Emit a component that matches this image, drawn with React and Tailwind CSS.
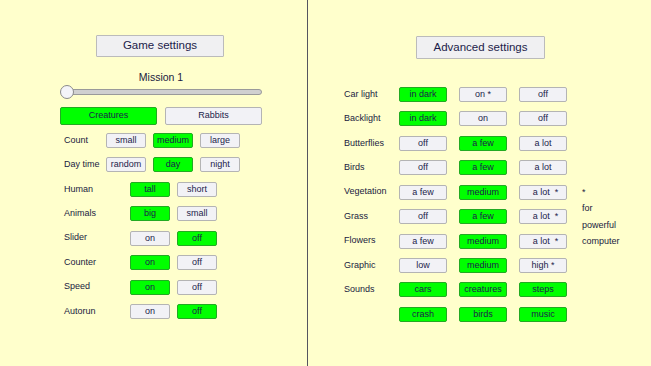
import React from "react";

const G = "bg-[#00ff00] border-[#22aa22]";
const N = "bg-[#f2f2f6] border-[#b4b4b4]";

function Btn({ on, w, children }) {
  return (
    <div
      className={`${on ? G : N} ${w} h-[15px] border rounded-[2px] flex items-center justify-center text-[9px] leading-none whitespace-pre text-[#1c1c4a]`}
    >
      {children}
    </div>
  );
}

function LRow({ label, items, indent }) {
  return (
    <div className="h-[24.43px] flex items-start">
      <div className="w-[46px] pl-[4px] h-[15px] flex items-center text-[9px] text-[#1a1a40]">{label}</div>
      <div className={`flex gap-[7px] ${indent ? "pl-[24px]" : ""}`}>
        {items.map(([t, on], i) => (
          <Btn key={i} on={on} w="w-[40px]">{t}</Btn>
        ))}
      </div>
    </div>
  );
}

function RRow({ label, items }) {
  return (
    <div className="h-[24.43px] flex items-start">
      <div className="w-[55px] h-[15px] flex items-center text-[9px] text-[#1a1a40]">{label}</div>
      <div className="flex gap-[12px]">
        {items.map(([t, on], i) => (
          <Btn key={i} on={on} w="w-[48px]">{t}</Btn>
        ))}
      </div>
    </div>
  );
}

export default function App() {
  return (
    <div
      className="w-[651px] h-[366px] bg-[#ffffcc] flex overflow-hidden"
      style={{ fontFamily: '"Liberation Sans", Arial, sans-serif' }}
    >
      <div className="w-[307px] h-full pl-[60px] pt-[35px] flex flex-col">
        <div className="ml-[36px] w-[128px] h-[22px] bg-[#f0f0f2] border border-[#bbbbbb] rounded-[1px] flex items-center justify-center text-[11.5px] text-[#1c1c4a]">
          Game settings
        </div>
        <div className="w-[202px] mt-[14px] h-[13px] flex items-center justify-center text-[10.5px] text-[#1a1a40]">
          Mission 1
        </div>
        <div className="relative w-[202px] h-[14px] mt-[1px]">
          <div className="absolute left-[6px] right-0 top-[4px] h-[6px] bg-[#d0d0d0] border border-[#9a9a9a] rounded-full" />
          <div className="absolute left-0 top-0 w-[14px] h-[14px] rounded-full bg-[#f4f4f8] border border-[#8a8a8a]" />
        </div>
        <div className="flex gap-[8px] mt-[8px]">
          <div className={`${G} w-[97px] h-[18px] border rounded-[2px] flex items-center justify-center text-[9px] text-[#1c1c4a]`}>Creatures</div>
          <div className={`${N} w-[97px] h-[18px] border rounded-[2px] flex items-center justify-center text-[9px] text-[#1c1c4a]`}>Rabbits</div>
        </div>
        <div className="mt-[8px] flex flex-col">
          <LRow label="Count" items={[["small"], ["medium", 1], ["large"]]} />
          <LRow label="Day time" items={[["random"], ["day", 1], ["night"]]} />
          <LRow label="Human" indent items={[["tall", 1], ["short"]]} />
          <LRow label="Animals" indent items={[["big", 1], ["small"]]} />
          <LRow label="Slider" indent items={[["on"], ["off", 1]]} />
          <LRow label="Counter" indent items={[["on", 1], ["off"]]} />
          <LRow label="Speed" indent items={[["on", 1], ["off"]]} />
          <LRow label="Autorun" indent items={[["on"], ["off", 1]]} />
        </div>
      </div>
      <div className="w-px h-full bg-[#555560]" />
      <div className="flex-1 h-full pl-[36px] pt-[36px] flex flex-col">
        <div className="ml-[72px] w-[129px] h-[23px] bg-[#f0f0f2] border border-[#bbbbbb] rounded-[1px] flex items-center justify-center text-[11.5px] text-[#1c1c4a]">
          Advanced settings
        </div>
        <div className="flex mt-[28px]">
          <div className="flex flex-col">
            <RRow label="Car light" items={[["in dark", 1], ["on *"], ["off"]]} />
            <RRow label="Backlight" items={[["in dark", 1], ["on"], ["off"]]} />
            <RRow label="Butterflies" items={[["off"], ["a few", 1], ["a lot"]]} />
            <RRow label="Birds" items={[["off"], ["a few", 1], ["a lot"]]} />
            <RRow label="Vegetation" items={[["a few"], ["medium", 1], ["  a lot  *"]]} />
            <RRow label="Grass" items={[["off"], ["a few", 1], ["  a lot  *"]]} />
            <RRow label="Flowers" items={[["a few"], ["medium", 1], ["  a lot  *"]]} />
            <RRow label="Graphic" items={[["low"], ["medium", 1], ["high *"]]} />
            <RRow label="Sounds" items={[["cars", 1], ["creatures", 1], ["steps", 1]]} />
            <RRow label="" items={[["crash", 1], ["birds", 1], ["music", 1]]} />
          </div>
          <div className="ml-[15px] mt-[97px] flex flex-col text-[9px] text-[#1a1a40] leading-[16.3px] whitespace-pre">
            <div>*</div>
            <div>for</div>
            <div>powerful</div>
            <div>computer</div>
          </div>
        </div>
      </div>
    </div>
  );
}
